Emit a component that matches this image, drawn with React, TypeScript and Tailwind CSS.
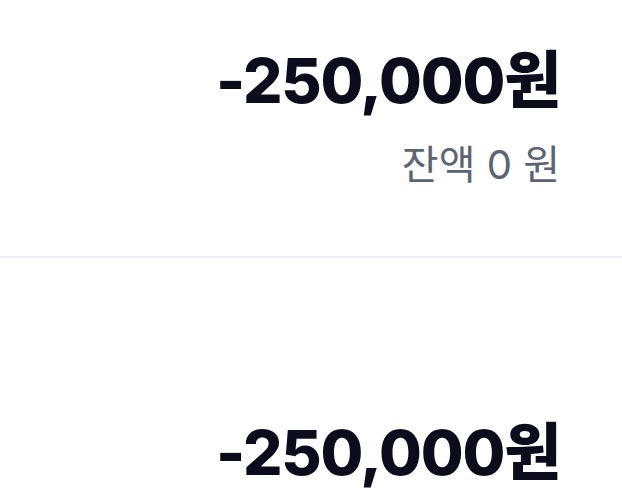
import React from 'react'

const font = { fontFamily: 'Inter, "Noto Sans CJK KR", sans-serif' }

function Amount({ value }: { value: string }) {
  return (
    <div className="text-[62px] leading-[62px] font-extrabold tracking-[-1.2px] text-[#0b0d1c]">
      {value}
    </div>
  )
}

export default function App() {
  return (
    <div className="w-[622px] h-[502px] overflow-hidden bg-white" style={font}>
      <section className="flex flex-col items-end pr-[62px] pt-[50px] h-[256px]">
        <Amount value="-250,000원" />
        <div className="mt-[33px] text-[40px] leading-[40px] text-[#5c6373]">잔액 0 원</div>
      </section>
      <div className="h-[2px] bg-[#eef0f4]" />
      <section className="flex flex-col items-end pr-[62px] pt-[164px]">
        <Amount value="-250,000원" />
      </section>
    </div>
  )
}
